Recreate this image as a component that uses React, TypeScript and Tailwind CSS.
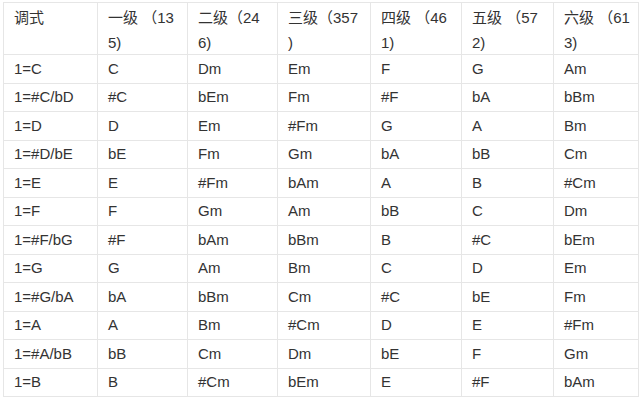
export default function App() {
  const header = [
    ['调式', ''],
    ['一级 （13', '5)'],
    ['二级（24', '6)'],
    ['三级（357', ')'],
    ['四级 （46', '1)'],
    ['五级 （57', '2)'],
    ['六级 （61', '3)'],
  ]

  const rows = [
    ['1=C', 'C', 'Dm', 'Em', 'F', 'G', 'Am'],
    ['1=#C/bD', '#C', 'bEm', 'Fm', '#F', 'bA', 'bBm'],
    ['1=D', 'D', 'Em', '#Fm', 'G', 'A', 'Bm'],
    ['1=#D/bE', 'bE', 'Fm', 'Gm', 'bA', 'bB', 'Cm'],
    ['1=E', 'E', '#Fm', 'bAm', 'A', 'B', '#Cm'],
    ['1=F', 'F', 'Gm', 'Am', 'bB', 'C', 'Dm'],
    ['1=#F/bG', '#F', 'bAm', 'bBm', 'B', '#C', 'bEm'],
    ['1=G', 'G', 'Am', 'Bm', 'C', 'D', 'Em'],
    ['1=#G/bA', 'bA', 'bBm', 'Cm', '#C', 'bE', 'Fm'],
    ['1=A', 'A', 'Bm', '#Cm', 'D', 'E', '#Fm'],
    ['1=#A/bB', 'bB', 'Cm', 'Dm', 'bE', 'F', 'Gm'],
    ['1=B', 'B', '#Cm', 'bEm', 'E', '#F', 'bAm'],
  ]

  return (
    <div className="w-[640px] h-[400px] bg-white overflow-hidden pt-[2px] pl-[3px] font-['Liberation_Sans','Noto_Sans_CJK_SC',sans-serif] text-[15px] text-[#333]">
      <div className="grid grid-cols-[94px_90px_90px_93px_91px_92px_85px] w-max border-l border-t border-[#e6e6e6]">
        {/* Header */}
        {header.map(([a, b], i) => (
          <div key={'h' + i} className="h-[52px] border-r border-b border-[#e6e6e6] px-[10px] pt-[2px] leading-[25px] whitespace-nowrap">
            <div>{a}</div>
            <div>{b}</div>
          </div>
        ))}

        {/* Rows */}
        {rows.map((row, r) =>
          row.map((cell, c) => (
            <div
              key={r + '-' + c}
              className={
                'flex items-center border-r border-b border-[#e6e6e6] px-[10px] whitespace-nowrap ' +
                (r % 2 === 0 ? 'h-[29px]' : 'h-[28px]')
              }
            >
              {cell}
            </div>
          ))
        )}
      </div>
    </div>
  )
}
